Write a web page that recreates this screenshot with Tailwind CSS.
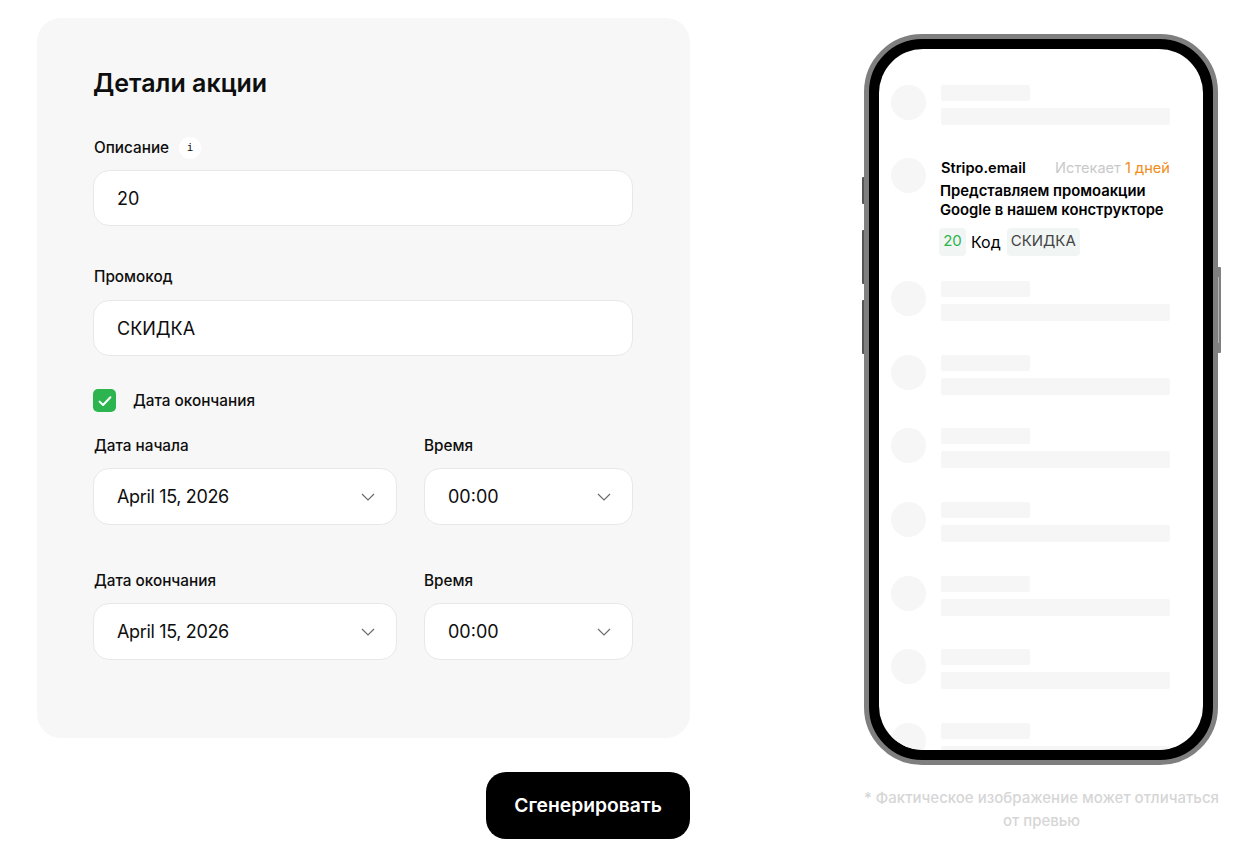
<!DOCTYPE html>
<html lang="ru">
<head>
<meta charset="utf-8">
<script src="https://cdn.jsdelivr.net/npm/@tailwindcss/browser@4"></script>
</head>
<body class="bg-white font-['Inter',sans-serif] text-[#0e0e0e] overflow-hidden">
<div class="w-[1257px] h-[854px] flex overflow-hidden">
  <div class="w-[653px] ml-[37px] mt-[18px] shrink-0 flex flex-col items-end">
    <section class="w-full h-[720px] bg-[#f7f7f7] rounded-[24px] pt-[48px] pl-[56px] pr-[57px]">
      <h2 class="text-[25px] leading-[34px] font-semibold">Детали акции</h2>
      <div class="mt-[36px] pl-[1px] h-[24px] flex items-center gap-[10px] text-[15.3px] font-medium">
        <span>Описание</span>
        <span class="w-[22px] h-[22px] rounded-full bg-white flex items-center justify-center font-['DejaVu_Sans_Mono',monospace] text-[11px] font-normal">i</span>
      </div>
      <div class="mt-[10px] h-[56px] bg-white border border-[#e8e8e8] rounded-[16px] pl-[23px] flex items-center text-[18px]">20</div>
      <div class="mt-[39px] pl-[1px] h-[24px] flex items-center text-[15.3px] font-medium">Промокод</div>
      <div class="mt-[11px] h-[56px] bg-white border border-[#e8e8e8] rounded-[16px] pl-[23px] flex items-center text-[18px]">СКИДКА</div>
      <div class="mt-[33px] h-[23px] flex items-center gap-[17px] text-[15.3px] font-medium">
        <span class="w-[23px] h-[23px] bg-[#2cb44e] rounded-[5px] flex items-center justify-center">
          <svg width="14" height="14" viewBox="0 0 14 14" fill="none"><path d="M1.6 7.6 L5.1 11 L12.4 3.2" stroke="#fff" stroke-width="2" stroke-linecap="round" stroke-linejoin="round"/></svg>
        </span>
        <span class="pt-[2px]">Дата окончания</span>
      </div>
      <div class="mt-[22px] grid grid-cols-[304px_209px] gap-x-[27px]">
        <div>
          <div class="pl-[1px] h-[24px] flex items-center text-[15.3px] font-medium">Дата начала</div>
          <div class="mt-[10px] h-[57px] bg-white border border-[#e8e8e8] rounded-[16px] pl-[23px] pr-[21px] flex items-center justify-between text-[18px]">
            <span class="tracking-[-0.35px]">April 15, 2026</span>
            <svg width="14" height="8" viewBox="0 0 14 8" fill="none"><path d="M1 1 L7 7 L13 1" stroke="#6b6b6b" stroke-width="1.2"/></svg>
          </div>
        </div>
        <div>
          <div class="h-[24px] flex items-center text-[15.3px] font-medium">Время</div>
          <div class="mt-[10px] h-[57px] bg-white border border-[#e8e8e8] rounded-[16px] pl-[23px] pr-[21px] flex items-center justify-between text-[18px]">
            <span>00:00</span>
            <svg width="14" height="8" viewBox="0 0 14 8" fill="none"><path d="M1 1 L7 7 L13 1" stroke="#6b6b6b" stroke-width="1.2"/></svg>
          </div>
        </div>
        <div class="mt-[44px]">
          <div class="pl-[1px] h-[24px] flex items-center text-[15.3px] font-medium">Дата окончания</div>
          <div class="mt-[10px] h-[57px] bg-white border border-[#e8e8e8] rounded-[16px] pl-[23px] pr-[21px] flex items-center justify-between text-[18px]">
            <span class="tracking-[-0.35px]">April 15, 2026</span>
            <svg width="14" height="8" viewBox="0 0 14 8" fill="none"><path d="M1 1 L7 7 L13 1" stroke="#6b6b6b" stroke-width="1.2"/></svg>
          </div>
        </div>
        <div class="mt-[44px]">
          <div class="h-[24px] flex items-center text-[15.3px] font-medium">Время</div>
          <div class="mt-[10px] h-[57px] bg-white border border-[#e8e8e8] rounded-[16px] pl-[23px] pr-[21px] flex items-center justify-between text-[18px]">
            <span>00:00</span>
            <svg width="14" height="8" viewBox="0 0 14 8" fill="none"><path d="M1 1 L7 7 L13 1" stroke="#6b6b6b" stroke-width="1.2"/></svg>
          </div>
        </div>
      </div>
    </section>
    <button class="mt-[34px] w-[204px] h-[67px] bg-black text-white rounded-[20px] text-[19.3px] font-semibold">Сгенерировать</button>
  </div>

  <div class="ml-[174px] mt-[34px] w-[354px] shrink-0 flex flex-col items-start">
    <div class="relative w-[354px] h-[731px]">
      <span class="absolute left-[-2px] top-[143px] w-[2px] h-[27px] bg-[#555] rounded-l-[1px]"></span>
      <span class="absolute left-[-2px] top-[196px] w-[2px] h-[54px] bg-[#555] rounded-l-[1px]"></span>
      <span class="absolute left-[-2px] top-[266px] w-[2px] h-[54px] bg-[#555] rounded-l-[1px]"></span>
      <span class="absolute right-[-3px] top-[233px] w-[3px] h-[86px] bg-[#808080] rounded-r-[1px]"></span>
      <span class="absolute right-[-1px] top-[243px] w-[1px] h-[66px] bg-[#b4b4b4]"></span>
      <div class="w-full h-full rounded-[58px] border-[5px] border-[#7f7f7f] bg-black p-[10px]">
        <div class="w-full h-full rounded-[44px] bg-white overflow-hidden pt-[36px] pl-[12px] pr-[33px]">
          <div class="flex gap-[15px] h-[73px]">
            <div class="w-[35px] h-[35px] rounded-full bg-[#f6f6f6] shrink-0"></div>
            <div class="flex-1"><div class="w-[89px] h-[16px] bg-[#f6f6f6] rounded-[2px]"></div><div class="mt-[7px] h-[17px] bg-[#f6f6f6] rounded-[2px]"></div></div>
          </div>
          <div class="flex gap-[15px] h-[123.2px]">
            <div class="w-[35px] h-[35px] rounded-full bg-[#f6f6f6] shrink-0"></div>
            <div class="flex-1 min-w-0 text-black">
              <div class="flex justify-between text-[14.6px] leading-[20px]">
                <span class="font-semibold">Stripo.email</span>
                <span><span class="text-[#c9c9c9]">Истекает</span> <span class="text-[#f08c1a]">1 дней</span></span>
              </div>
              <div class="-ml-[1px] mt-[4px] text-[14.8px] leading-[19px] font-semibold whitespace-nowrap">Представляем промоакции<br>Google в нашем конструкторе</div>
              <div class="-ml-[2px] mt-[8px] flex items-center text-[15px]">
                <span class="h-[28px] w-[27px] text-center bg-[#f1f5f4] rounded-[4px] text-[#2cb44e] leading-[25px]">20</span>
                <span class="ml-[5px] text-[16px]">Код</span>
                <span class="ml-[6px] h-[28px] w-[73px] text-center bg-[#f1f5f4] rounded-[4px] text-[#444] leading-[25px]">СКИДКА</span>
              </div>
            </div>
          </div>
          <div class="flex gap-[15px] h-[73.6px]"><div class="w-[35px] h-[35px] rounded-full bg-[#f6f6f6] shrink-0"></div><div class="flex-1"><div class="w-[89px] h-[16px] bg-[#f6f6f6] rounded-[2px]"></div><div class="mt-[7px] h-[17px] bg-[#f6f6f6] rounded-[2px]"></div></div></div>
          <div class="flex gap-[15px] h-[73.6px]"><div class="w-[35px] h-[35px] rounded-full bg-[#f6f6f6] shrink-0"></div><div class="flex-1"><div class="w-[89px] h-[16px] bg-[#f6f6f6] rounded-[2px]"></div><div class="mt-[7px] h-[17px] bg-[#f6f6f6] rounded-[2px]"></div></div></div>
          <div class="flex gap-[15px] h-[73.6px]"><div class="w-[35px] h-[35px] rounded-full bg-[#f6f6f6] shrink-0"></div><div class="flex-1"><div class="w-[89px] h-[16px] bg-[#f6f6f6] rounded-[2px]"></div><div class="mt-[7px] h-[17px] bg-[#f6f6f6] rounded-[2px]"></div></div></div>
          <div class="flex gap-[15px] h-[73.6px]"><div class="w-[35px] h-[35px] rounded-full bg-[#f6f6f6] shrink-0"></div><div class="flex-1"><div class="w-[89px] h-[16px] bg-[#f6f6f6] rounded-[2px]"></div><div class="mt-[7px] h-[17px] bg-[#f6f6f6] rounded-[2px]"></div></div></div>
          <div class="flex gap-[15px] h-[73.6px]"><div class="w-[35px] h-[35px] rounded-full bg-[#f6f6f6] shrink-0"></div><div class="flex-1"><div class="w-[89px] h-[16px] bg-[#f6f6f6] rounded-[2px]"></div><div class="mt-[7px] h-[17px] bg-[#f6f6f6] rounded-[2px]"></div></div></div>
          <div class="flex gap-[15px] h-[73.6px]"><div class="w-[35px] h-[35px] rounded-full bg-[#f6f6f6] shrink-0"></div><div class="flex-1"><div class="w-[89px] h-[16px] bg-[#f6f6f6] rounded-[2px]"></div><div class="mt-[7px] h-[17px] bg-[#f6f6f6] rounded-[2px]"></div></div></div>
          <div class="flex gap-[15px] h-[73.6px]"><div class="w-[35px] h-[35px] rounded-full bg-[#f6f6f6] shrink-0"></div><div class="flex-1"><div class="w-[89px] h-[16px] bg-[#f6f6f6] rounded-[2px]"></div><div class="mt-[7px] h-[17px] bg-[#f6f6f6] rounded-[2px]"></div></div></div>
        </div>
      </div>
    </div>
    <p class="mt-[21px] w-[355px] text-center text-[15px] leading-[23px] font-medium text-[#d6d6d6] whitespace-nowrap">* Фактическое изображение может отличаться<br>от превью</p>
  </div>
</div>
</body>
</html>
